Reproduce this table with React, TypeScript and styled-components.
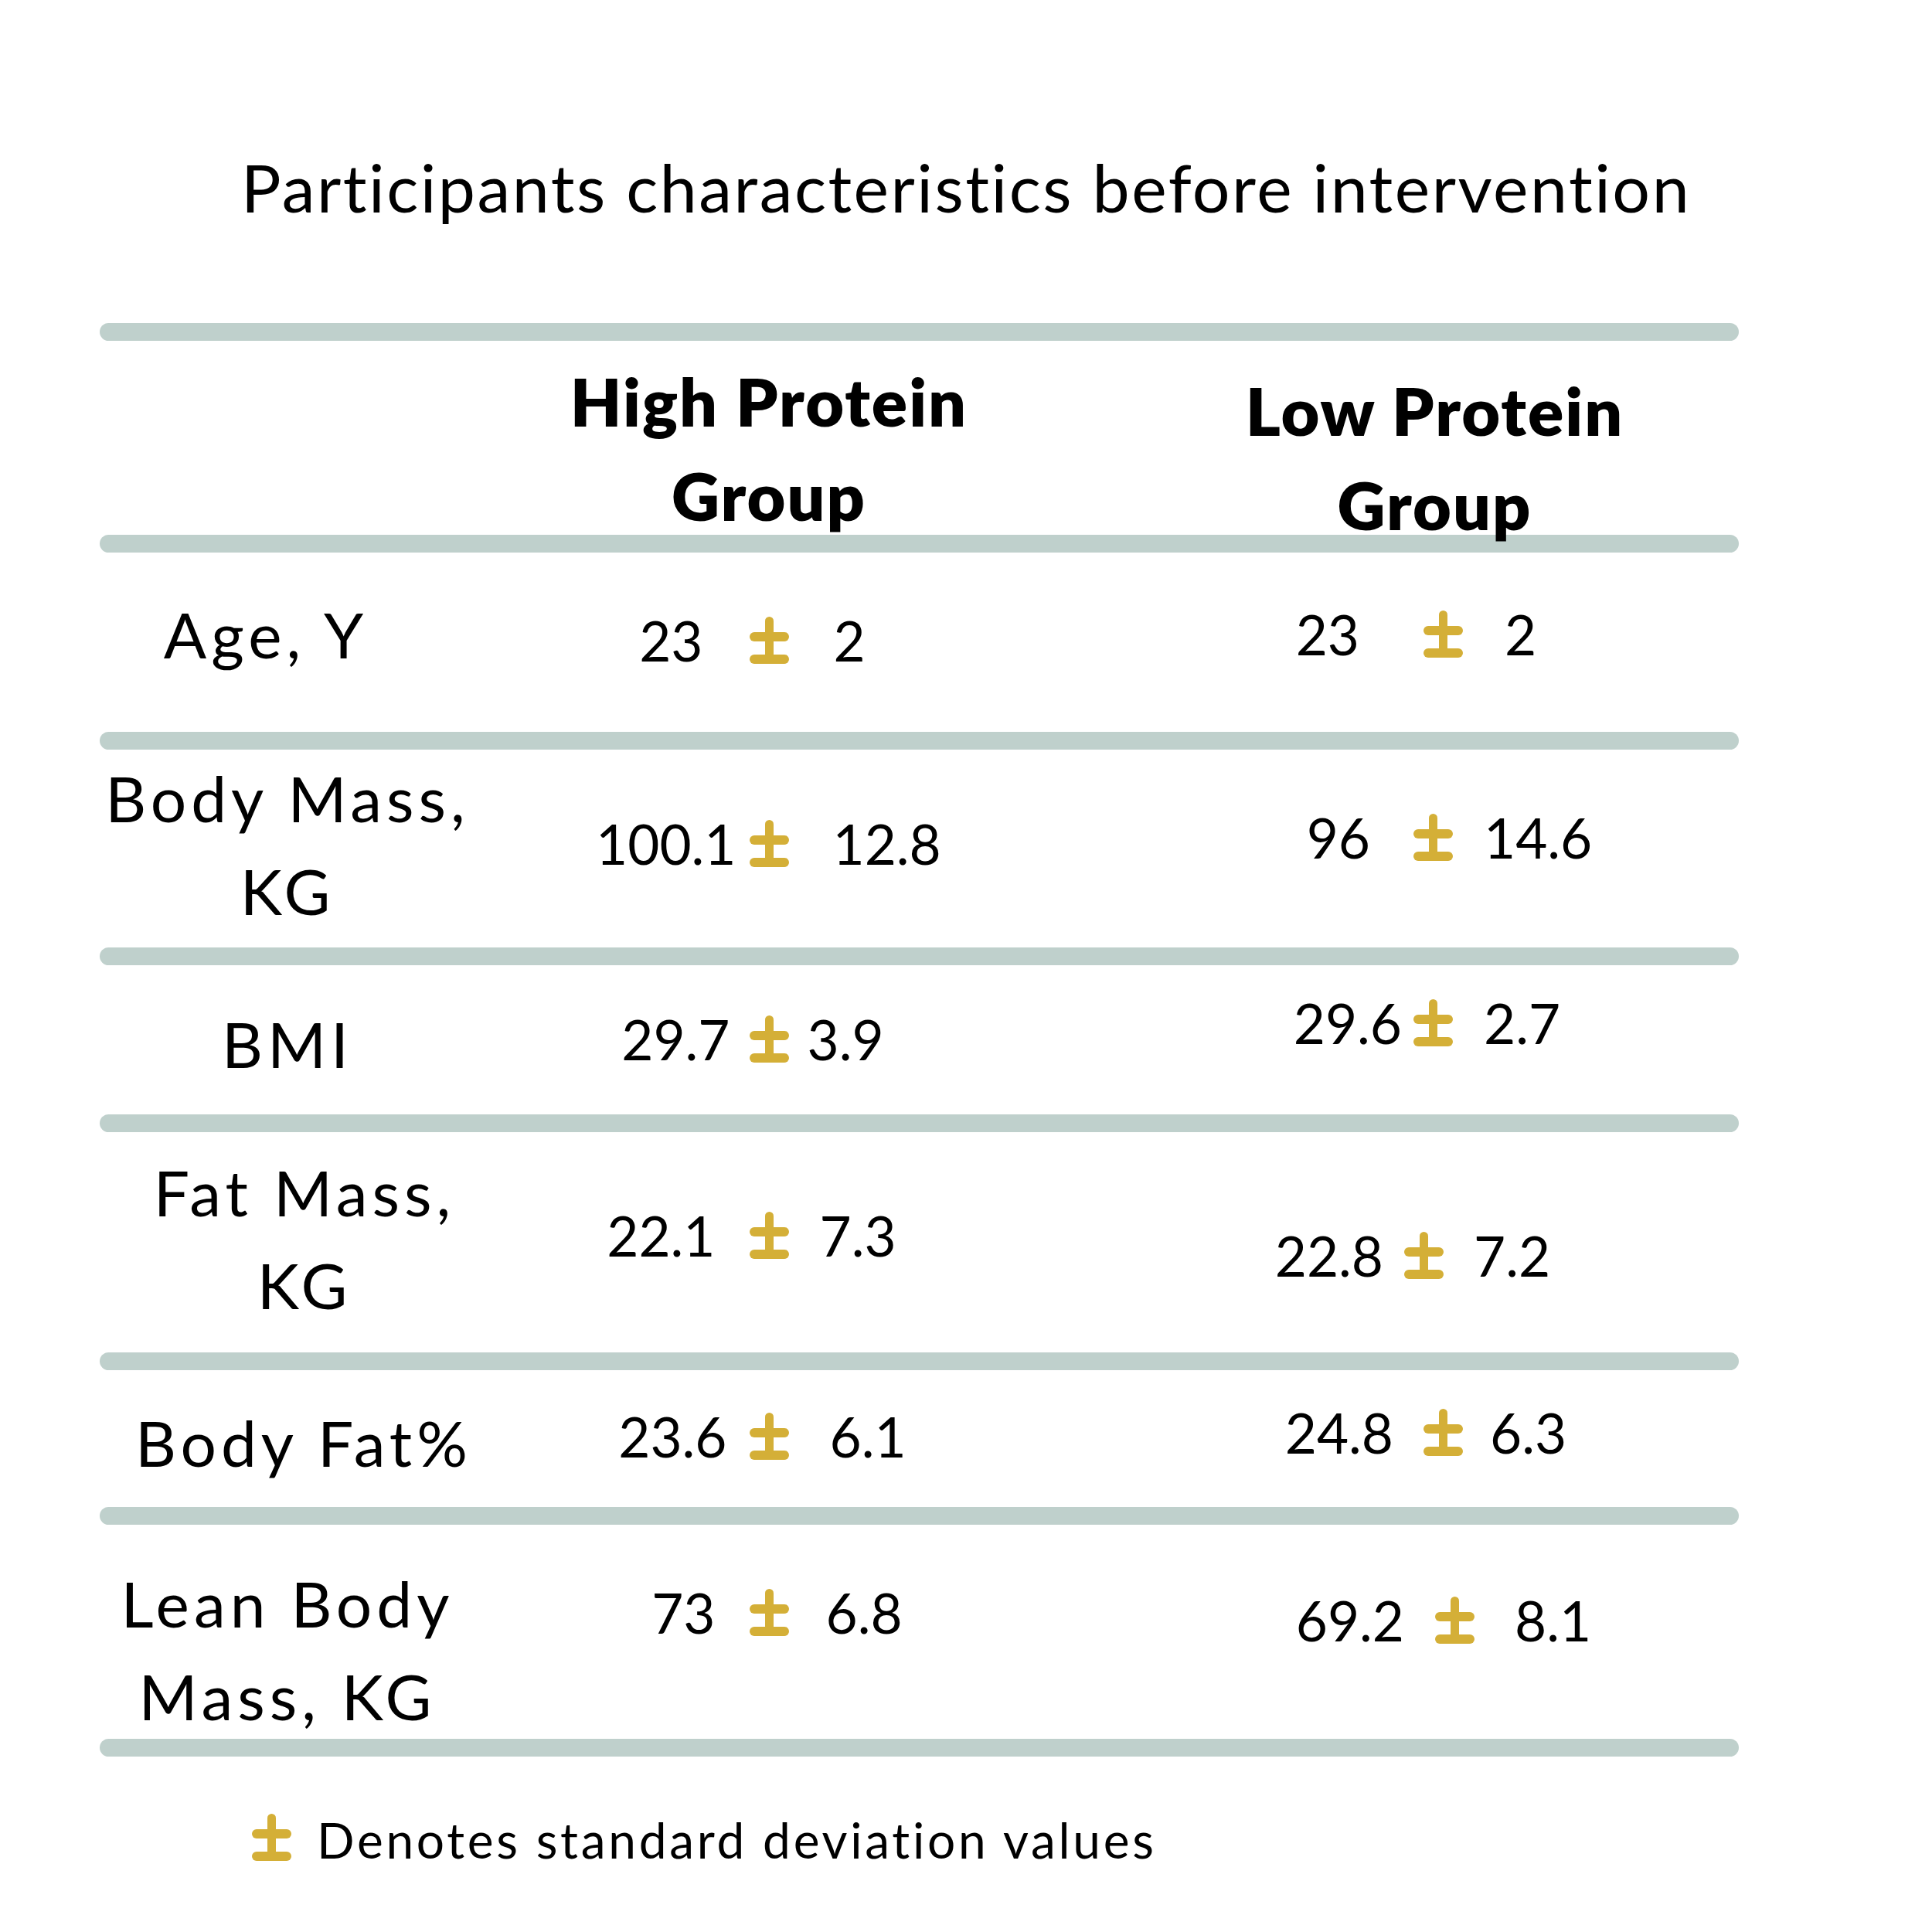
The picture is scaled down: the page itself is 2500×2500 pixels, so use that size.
import React from 'react';
import styled, { createGlobalStyle } from 'styled-components';

const GOLD = '#d4af37';
const RULE = '#bfd0cc';

// Lato metrics: ascent 0.987em, descent 0.213em
const baselineOf = (size: number, lh: number) => (lh - 1.2 * size) / 2 + 0.987 * size;

const LABEL_SIZE = 82;
const LABEL_LH = 120;
const HEAD_SIZE = 86;
const HEAD_LH = 122;
const NUM_SIZE = 71;

const GlobalStyle = createGlobalStyle`
  html, body {
    margin: 0;
    padding: 0;
    background: #ffffff;
  }
  body {
    font-family: Lato, "Liberation Sans", sans-serif;
    color: #000000;
  }
`;

const Page = styled.div`
  width: 2500px;
  min-height: 2500px;
  padding-top: 199px;
  box-sizing: border-box;
`;

const Title = styled.h1`
  margin: 0 0 133px;
  font-size: 86px;
  line-height: 86px;
  font-weight: 400;
  text-align: center;
  letter-spacing: 2.5px;
`;

const Table = styled.div`
  margin-left: 129px;
  width: 2121px;
`;

const Rule = styled.div`
  height: 23px;
  border-radius: 12px;
  background: ${RULE};
`;

const Row = styled.div<{ $h: number }>`
  display: grid;
  grid-template-columns: 486px 760px 1fr;
  align-items: start;
  height: ${(p) => p.$h}px;
`;

const shiftPad = (shift = 0) =>
  `padding-left: ${Math.max(0, shift * 2)}px; padding-right: ${Math.max(0, -shift * 2)}px;`;

const Label = styled.div<{ $base: number; $shift?: number }>`
  font-size: ${LABEL_SIZE}px;
  line-height: ${LABEL_LH}px;
  letter-spacing: 6px;
  text-align: center;
  padding-top: ${(p) => p.$base - baselineOf(LABEL_SIZE, LABEL_LH)}px;
  ${(p) => shiftPad(p.$shift)}
`;

const Head = styled.div<{ $base: number; $shift?: number }>`
  font-size: ${HEAD_SIZE}px;
  line-height: ${HEAD_LH}px;
  font-weight: 800;
  letter-spacing: 2px;
  text-align: center;
  padding-top: ${(p) => p.$base - baselineOf(HEAD_SIZE, HEAD_LH)}px;
  ${(p) => shiftPad(p.$shift)}
`;

const Figure = styled.div<{ $base: number; $shift?: number }>`
  display: grid;
  grid-template-columns: 1fr auto 1fr;
  align-items: baseline;
  font-size: ${NUM_SIZE}px;
  line-height: ${NUM_SIZE}px;
  padding-top: ${(p) => p.$base - baselineOf(NUM_SIZE, NUM_SIZE)}px;
  ${(p) => shiftPad(p.$shift)}
`;

const Num = styled.span<{ $side: 'left' | 'right'; $gap: number }>`
  justify-self: ${(p) => (p.$side === 'left' ? 'end' : 'start')};
  ${(p) => (p.$side === 'left' ? `margin-right: ${p.$gap}px;` : `margin-left: ${p.$gap}px;`)}
`;

const MarkBox = styled.span`
  svg {
    display: inline-block;
    vertical-align: -3px;
  }
`;

const Note = styled.div`
  display: flex;
  align-items: baseline;
  gap: 33px;
  margin: 74px 0 0 326px;
  font-size: 64px;
  line-height: 64px;
  letter-spacing: 3.7px;
`;

const PlusMinus = () => (
  <MarkBox>
    <svg width="51" height="61" viewBox="0 0 51 61">
      <rect x="20" y="0" width="11" height="56" rx="5.5" fill={GOLD} />
      <rect x="0" y="20" width="51" height="12" rx="6" fill={GOLD} />
      <rect x="0" y="49" width="51" height="12" rx="6" fill={GOLD} />
    </svg>
  </MarkBox>
);

type Val = { a: string; b: string; gl: number; gr: number; base: number; shift?: number };
type RowData = { h: number; label: string[]; base: number; shift?: number; hi: Val; lo: Val };

const rows: RowData[] = [
  {
    h: 232, label: ['Age, Y'], base: 137, shift: -28,
    hi: { a: '23', b: '2', gl: 60, gr: 58, base: 141 },
    lo: { a: '23', b: '2', gl: 83, gr: 54, base: 133, shift: 55 },
  },
  {
    h: 256, label: ['Body Mass,', 'KG'], base: 94,
    hi: { a: '100.1', b: '12.8', gl: 17, gr: 57, base: 149 },
    lo: { a: '96', b: '14.6', gl: 56, gr: 40, base: 141, shift: 42 },
  },
  {
    h: 193, label: ['BMI'], base: 133,
    hi: { a: '29.7', b: '3.9', gl: 25, gr: 24, base: 123 },
    lo: { a: '29.6', b: '2.7', gl: 15, gr: 40, base: 102, shift: 42 },
  },
  {
    h: 285, label: ['Fat Mass,', 'KG'], base: 109, shift: 22,
    hi: { a: '22.1', b: '7.3', gl: 44, gr: 40, base: 161 },
    lo: { a: '22.8', b: '7.2', gl: 27, gr: 39, base: 187, shift: 30 },
  },
  {
    h: 177, label: ['Body Fat%'], base: 125, shift: 21,
    hi: { a: '23.6', b: '6.1', gl: 29, gr: 53, base: 113 },
    lo: { a: '24.8', b: '6.3', gl: 39, gr: 35, base: 108, shift: 55 },
  },
  {
    h: 277, label: ['Lean Body', 'Mass, KG'], base: 133,
    hi: { a: '73', b: '6.8', gl: 44, gr: 48, base: 141 },
    lo: { a: '69.2', b: '8.1', gl: 40, gr: 52, base: 151, shift: 70 },
  },
];

const Value = ({ v }: { v: Val }) => (
  <Figure $base={v.base} $shift={v.shift}>
    <Num $side="left" $gap={v.gl}>{v.a}</Num>
    <PlusMinus />
    <Num $side="right" $gap={v.gr}>{v.b}</Num>
  </Figure>
);

const App: React.FC = () => {
  return (
    <Page>
      <GlobalStyle />
      <Title>Participants characteristics before intervention</Title>
      <Table>
        <Rule />
        <Row $h={251}>
          <div />
          <Head $base={111}>High Protein<br />Group</Head>
          <Head $base={123} $shift={44}>Low Protein<br />Group</Head>
        </Row>
        <Rule />
        {rows.map((r) => (
          <React.Fragment key={r.label.join(' ')}>
            <Row $h={r.h}>
              <Label $base={r.base} $shift={r.shift}>
                {r.label.map((line, i) => (
                  <React.Fragment key={line}>
                    {i > 0 && <br />}
                    {line}
                  </React.Fragment>
                ))}
              </Label>
              <Value v={r.hi} />
              <Value v={r.lo} />
            </Row>
            <Rule />
          </React.Fragment>
        ))}
      </Table>
      <Note>
        <PlusMinus />
        <span>Denotes standard deviation values</span>
      </Note>
    </Page>
  );
};

export default App;
